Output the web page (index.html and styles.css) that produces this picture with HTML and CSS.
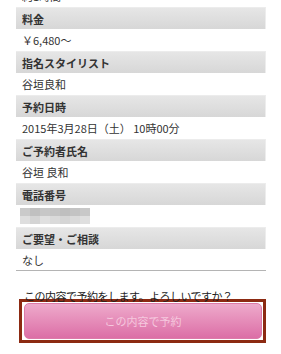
FILE: index.html
```html
<!DOCTYPE html>
<html lang="ja">
<head>
    <meta charset="UTF-8">
    <meta name="viewport" content="width=device-width, initial-scale=1.0">
    <title>予約内容の確認</title>
    <link rel="stylesheet" href="styles.css">
</head>
<body>
    <div class="container">
        <dl class="detail-list">
            <dd class="value value-first">約1時間</dd>
            <dt class="label">料金</dt>
            <dd class="value">￥6,480～</dd>
            <dt class="label">指名スタイリスト</dt>
            <dd class="value">谷垣良和</dd>
            <dt class="label">予約日時</dt>
            <dd class="value">2015年3月28日（土） 10時00分</dd>
            <dt class="label">ご予約者氏名</dt>
            <dd class="value">谷垣 良和</dd>
            <dt class="label">電話番号</dt>
            <dd class="value">
                <div class="blurred">
                    <span></span><span></span><span></span><span></span><span></span><span></span><span></span>
                    <span></span><span></span><span></span><span></span><span></span><span></span><span></span>
                </div>
            </dd>
            <dt class="label">ご要望・ご相談</dt>
            <dd class="value value-last">なし</dd>
        </dl>

        <p class="confirm-text">この内容で予約をします。よろしいですか？</p>
        <div class="submit-frame">
            <button class="submit-button">この内容で予約</button>
        </div>
    </div>
</body>
</html>
```

FILE: styles.css
```css
html, body {
    margin: 0;
    padding: 0;
    background-color: #fff;
    font-family: "Noto Sans CJK JP", "Noto Sans", sans-serif;
    color: #333;
    overflow: hidden;
}
.container {
    padding: 0 15px 0 16px;
}
.detail-list {
    margin: -15px 0 0 0;
    padding: 0;
}
.label {
    height: 22px;
    box-sizing: border-box;
    padding-left: 6px;
    display: flex;
    align-items: center;
    font-size: 11px;
    font-weight: bold;
    color: #333;
    background: linear-gradient(#e6e6e6, #d7d7d7);
    border-top: 1px solid #ececec;
    border-right: 1px solid #ededed;
}
.value {
    margin: 0;
    height: 22px;
    box-sizing: border-box;
    padding-left: 6px;
    display: flex;
    align-items: center;
    font-size: 11px;
    color: #333;
}
.value-last {
    border-bottom: 1px solid #b4b4b4;
}
.blurred {
    display: grid;
    grid-template-columns: repeat(7, 10px);
    grid-template-rows: 8px 8px;
    margin-left: -2px;
}
.blurred span:nth-child(1) { background: #cacaca; }
.blurred span:nth-child(2) { background: #c0c0c0; }
.blurred span:nth-child(3) { background: #c7c7c7; }
.blurred span:nth-child(4) { background: #c4c4c4; }
.blurred span:nth-child(5) { background: #bfbfbf; }
.blurred span:nth-child(6) { background: #c3c3c3; }
.blurred span:nth-child(7) { background: #c8c8c8; }
.blurred span:nth-child(8) { background: #dedede; }
.blurred span:nth-child(9) { background: #d4d4d4; }
.blurred span:nth-child(10) { background: #e0e0e0; }
.blurred span:nth-child(11) { background: #dadada; }
.blurred span:nth-child(12) { background: #d5d5d5; }
.blurred span:nth-child(13) { background: #dadada; }
.blurred span:nth-child(14) { background: #dfdfdf; }
.confirm-text {
    margin: 19px 0 0 8px;
    font-size: 11px;
    line-height: 12px;
    letter-spacing: -0.5px;
    color: #222;
}
.submit-frame {
    margin: -3px 0 0 3px;
    border: 3px solid #8c2a12;
    padding: 1px 1px 1px 2px;
    background: #fff;
}
.submit-button {
    display: block;
    width: 100%;
    height: 36px;
    border: 1px solid #dc7aa8;
    border-radius: 5px;
    background: linear-gradient(#eeaacb, #dc6ea6);
    color: #f5c8de;
    font-family: "Noto Sans CJK JP", "Noto Sans", sans-serif;
    font-size: 11px;
    cursor: pointer;
}
```
